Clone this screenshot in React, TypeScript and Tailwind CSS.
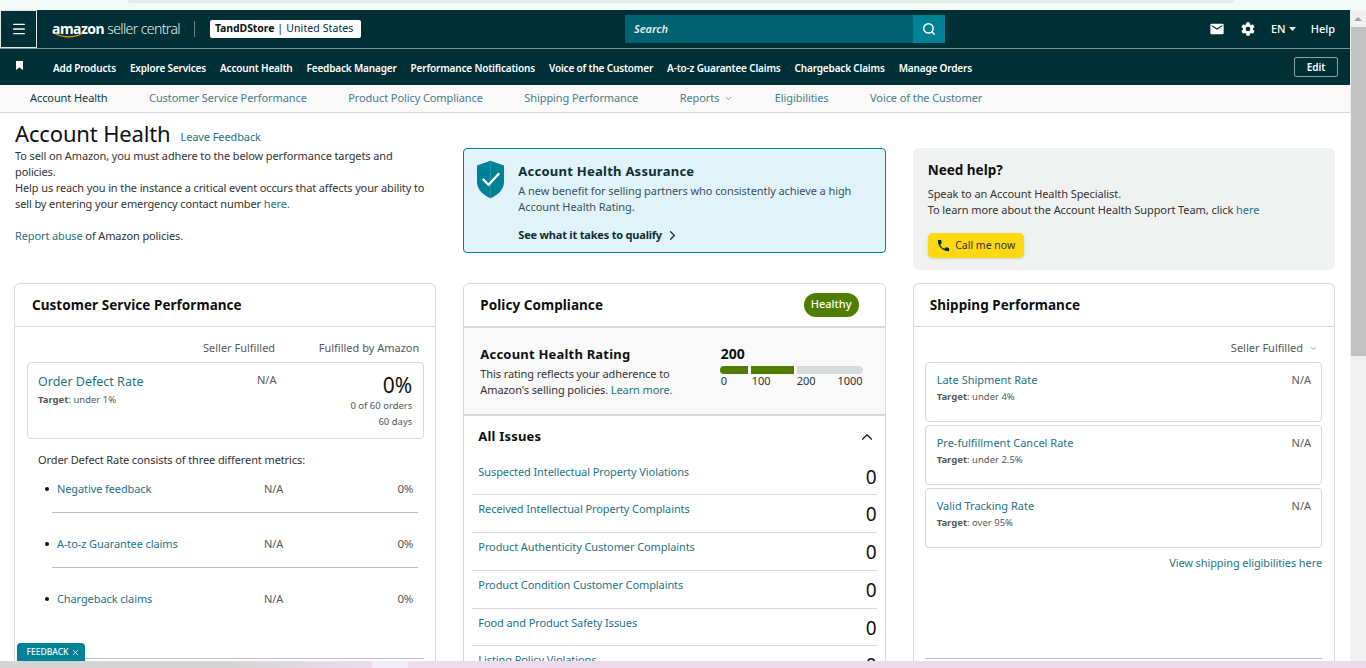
import type { ReactNode } from "react";
import { ChevronDown, ChevronRight, ChevronUp, Menu, Search, X } from "lucide-react";

const NAV_ITEMS = [
  "Add Products",
  "Explore Services",
  "Account Health",
  "Feedback Manager",
  "Performance Notifications",
  "Voice of the Customer",
  "A-to-z Guarantee Claims",
  "Chargeback Claims",
  "Manage Orders",
];

const SHIPPING = [
  { name: "Late Shipment Rate", target: "under 4%" },
  { name: "Pre-fulfillment Cancel Rate", target: "under 2.5%" },
  { name: "Valid Tracking Rate", target: "over 95%" },
];

const ISSUES = [
  "Suspected Intellectual Property Violations",
  "Received Intellectual Property Complaints",
  "Product Authenticity Customer Complaints",
  "Product Condition Customer Complaints",
  "Food and Product Safety Issues",
  "Listing Policy Violations",
];

const METRICS = ["Negative feedback", "A-to-z Guarantee claims", "Chargeback claims"];

const Header = () => (
  <div className="h-[39px] bg-[#002f36] border-b border-[#7d8f92] flex items-center text-white shrink-0">
    <button className="w-[37px] h-[38px] border border-[#e3e6e6] flex items-center justify-center shrink-0">
      <Menu size={16} strokeWidth={2} />
    </button>
    <div className="ml-[15px] w-[130px] relative leading-none whitespace-nowrap -mt-[3px]">
      <span className="text-[14px] font-bold tracking-[-0.5px]">amazon</span>
      <span className="text-[14px] ml-[3px] tracking-[-0.6px] font-light text-[#e8eeee]">seller central</span>
      <svg className="absolute left-[2px] top-[12px]" width="30" height="7" viewBox="0 0 30 7" fill="none">
        <path d="M1 1.5C9 6 20 6 28 1.5" stroke="#ff9900" strokeWidth="1.4" />
      </svg>
    </div>
    <div className="w-px h-[16px] bg-[#6d8286] ml-[12px]" />
    <div className="ml-[15px] h-[18px] w-[151px] px-[5px] bg-white rounded-[2px] flex items-center text-[10.5px] text-[#002f36] tracking-[0.1px] whitespace-nowrap">
      <span className="font-bold text-[#0f1111] tracking-[-0.1px]">TandDStore</span>
      <span className="mx-[3px]">|</span>
      <span>United States</span>
    </div>
    <div className="ml-[264px] w-[320px] h-[28px] flex">
      <div className="flex-1 bg-[#006170] flex items-center px-[9px] text-[11px] italic font-semibold text-[#e6eff0]">Search</div>
      <div className="w-[32px] bg-[#008296] flex items-center justify-center">
        <Search size={14} strokeWidth={2.5} />
      </div>
    </div>
    <div className="ml-auto flex items-center pr-[15px]">
      <svg width="16" height="16" viewBox="0 0 24 24" fill="white">
        <path d="M20 4H4a2 2 0 0 0-2 2v12a2 2 0 0 0 2 2h16a2 2 0 0 0 2-2V6a2 2 0 0 0-2-2zm0 4-8 5-8-5V6l8 5 8-5v2z" />
      </svg>
      <svg className="ml-[15px]" width="16" height="16" viewBox="0 0 24 24" fill="white">
        <path d="M19.4 13c.1-.3.1-.7.1-1s0-.7-.1-1l2.1-1.6c.2-.2.2-.4.1-.6l-2-3.5c-.1-.2-.4-.3-.6-.2l-2.5 1c-.5-.4-1.100-.7-1.700-1L14.500 2.400c0-.2-.2-.4-.5-.4h-4c-.2 0-.5.2-.5.4l-.4 2.700c-.6.2-1.200.6-1.700 1l-2.500-1c-.2-.1-.5 0-.6.2l-2 3.500c-.1.200-.1.500.100.600L4.500 11c0 .3-.1.700-.1 1s0 .7.1 1l-2.100 1.600c-.2.200-.2.400-.1.600l2 3.500c.1.200.4.300.6.200l2.500-1c.5.400 1.100.700 1.700 1l.4 2.700c0 .2.200.4.500.4h4c.2 0 .5-.2.500-.4l.4-2.700c.6-.2 1.200-.6 1.700-1l2.500 1c.2.100.5 0 .6-.2l2-3.500c.1-.2.1-.4-.1-.6L19.400 13zM12 15.500a3.500 3.500 0 1 1 0-7 3.500 3.500 0 0 1 0 7z" />
      </svg>
      <span className="ml-[15px] text-[11px] font-medium">EN</span>
      <svg className="ml-[3px]" width="7" height="4" viewBox="0 0 7 4" fill="#e6eff0">
        <path d="M0 0h7L3.500 4z" />
      </svg>
      <span className="ml-[15px] text-[11px] font-medium">Help</span>
    </div>
  </div>
);

const NavBar = () => (
  <div className="h-[36px] bg-[#002f36] flex items-center text-white shrink-0">
    <svg className="ml-[16px] -mt-[4px]" width="7" height="9" viewBox="0 0 7 9" fill="white">
      <path d="M0 0h7v9L3.500 6.500 0 9z" />
    </svg>
    <div className="ml-[30px] flex gap-[14px] text-[10px] font-semibold tracking-[-0.17px] pt-[2px]">
      {NAV_ITEMS.map((item) => (
        <span key={item} className="whitespace-nowrap">{item}</span>
      ))}
    </div>
    <button className="ml-auto mr-[12px] w-[44px] h-[20px] border border-[#8c9ea1] rounded-[2px] text-[10px] font-semibold">Edit</button>
  </div>
);

const SubNav = () => (
  <div className="h-[28px] bg-[#f9f9f9] border-b border-[#d5d9d9] flex items-center pl-[30px] gap-[41.5px] text-[11px] tracking-[-0.09px] text-[#4a7c85] shrink-0">
    <span className="text-[#0f3a42]">Account Health</span>
    <span>Customer Service Performance</span>
    <span>Product Policy Compliance</span>
    <span>Shipping Performance</span>
    <span className="flex items-center gap-[5px]">
      Reports <ChevronDown size={9} className="text-[#6f7f82]" />
    </span>
    <span>Eligibilities</span>
    <span>Voice of the Customer</span>
  </div>
);

const CardTitle = ({ children }: { children: ReactNode }) => (
  <h2 className="text-[13.5px] font-bold text-[#0f1111] tracking-[0.05px]">{children}</h2>
);

const CustomerServiceCard = () => (
  <div className="border border-[#d5d9d9] rounded-[6px] h-[420px] bg-white">
    <div className="h-[43px] border-b border-[#d5d9d9] flex items-center pl-[17px]">
      <CardTitle>Customer Service Performance</CardTitle>
    </div>
    <div className="pl-[12px] pr-[11px]">
      <div className="h-[35px] flex items-center text-[11px] text-[#565959] pt-[8px]">
        <span className="ml-[176px]">Seller Fulfilled</span>
        <span className="ml-auto pr-[5px]">Fulfilled by Amazon</span>
      </div>
      <div className="h-[77px] border border-[#d5d9d9] rounded-[4px] pl-[10px] pr-[11px] pt-[9px] flex">
        <div className="w-[219px]">
          <div className="text-[12.5px] text-[#1d7484] leading-[20px]">Order Defect Rate</div>
          <div className="text-[9.5px] text-[#565959] leading-[16px]">
            <span className="font-bold">Target</span>: under 1%
          </div>
        </div>
        <span className="text-[11px] text-[#565959] leading-[16px]">N/A</span>
        <div className="ml-auto text-right text-[9.5px] text-[#565959] leading-[16px]">
          <div className="text-[21px] leading-[26px] text-[#0f1111]">0%</div>
          <div>0 of 60 orders</div>
          <div>60 days</div>
        </div>
      </div>
      <p className="mt-[13px] ml-[11px] text-[11px] tracking-[-0.1px] text-[#333] leading-[16px]">Order Defect Rate consists of three different metrics:</p>
      <ul className="mt-[1px]">
        {METRICS.map((m) => (
          <li key={m} className="h-[44px] mb-[11px] pt-[12px] ml-[25px] mr-[6px] border-b border-[#bbbfbf] last:border-b-0 relative flex text-[11px] tracking-[-0.1px] leading-[16px] pr-[5px]">
            <span className="absolute -left-[7px] top-[18px] w-[4px] h-[4px] rounded-full bg-[#0f1111]" />
            <span className="ml-[5px] w-[207px] text-[#1d7484]">{m}</span>
            <span className="text-[#565959]">N/A</span>
            <span className="ml-auto text-[11.5px] text-[#565959]">0%</span>
          </li>
        ))}
      </ul>
      <div className="mt-[35px] border-t border-[#bbbfbf]" />
    </div>
  </div>
);

const PolicyCard = () => (
  <div className="border border-[#d5d9d9] rounded-[6px] h-[420px] bg-white overflow-hidden">
    <div className="h-[44px] border-b-2 border-[#d5d9d9] flex items-center pl-[16px] pr-[26px] justify-between">
      <CardTitle>Policy Compliance</CardTitle>
      <span className="-mt-[1px] h-[24px] w-[55px] rounded-full bg-[#507c00] text-white text-[11px] font-medium flex items-center justify-center">Healthy</span>
    </div>
    <div className="h-[88px] bg-[#f9f9f9] border-b-2 border-[#d5d9d9] pl-[16px] pr-[22px] pt-[16px] flex justify-between">
      <div>
        <div className="text-[13px] font-bold text-[#0f1111] leading-[20px] tracking-[0.2px]">Account Health Rating</div>
        <div className="text-[11px] tracking-[-0.1px] text-[#333] leading-[16px] mt-[2px]">
          This rating reflects your adherence to
          <br />
          Amazon's selling policies. <span className="text-[#1d7484]">Learn more.</span>
        </div>
      </div>
      <div className="w-[143px] pt-[2px]">
        <div className="pl-[1px] text-[14px] font-bold leading-[15px] text-[#0f1111]">200</div>
        <div className="flex gap-[3px] h-[8px] mt-[5px]">
          <div className="w-[28px] bg-[#507c00] rounded-l-full" />
          <div className="w-[43px] bg-[#507c00]" />
          <div className="flex-1 bg-[#d5dbdb] rounded-r-full" />
        </div>
        <div className="pl-[1px] text-[11px] leading-[14px] text-[#333] flex">
          <span className="w-[31px]">0</span>
          <span className="w-[45px]">100</span>
          <span>200</span>
          <span className="ml-auto">1000</span>
        </div>
      </div>
    </div>
    <div className="flex items-center justify-between pl-[14px] pr-[9px] h-[41px]">
      <span className="text-[13px] font-bold text-[#0f1111] tracking-[0.2px]">All Issues</span>
      <ChevronUp size={18} strokeWidth={1.5} className="text-[#0f1111]" />
    </div>
    <div className="px-[8px] pt-[0.5px]">
      {ISSUES.map((issue) => (
        <div key={issue} className="h-[37.75px] border-b border-[#d5d9d9] flex justify-between pl-[6px]">
          <span className="text-[11px] tracking-[-0.1px] leading-[16px] pt-[6px] text-[#1d7484]">{issue}</span>
          <span className="text-[19px] text-[#0f1111] leading-[24px] pt-[7px]">0</span>
        </div>
      ))}
    </div>
  </div>
);

const ShippingCard = () => (
  <div className="border border-[#d5d9d9] rounded-[6px] h-[420px] bg-white">
    <div className="h-[43px] border-b border-[#d5d9d9] flex items-center pl-[16px]">
      <CardTitle>Shipping Performance</CardTitle>
    </div>
    <div className="pl-[11px] pr-[12px]">
      <div className="h-[35px] flex items-center justify-end gap-[6px] text-[11px] text-[#565959] pr-[4px] pt-[8px]">
        Seller Fulfilled <ChevronDown size={9} className="text-[#6f7f82]" />
      </div>
      <div className="flex flex-col gap-[3px]">
        {SHIPPING.map((s) => (
          <div key={s.name} className="h-[60px] border border-[#d5d9d9] rounded-[4px] pl-[11px] pr-[10px] pt-[9px] flex justify-between">
            <div>
              <div className="text-[11px] leading-[16px] mb-[1px] text-[#1d7484]">{s.name}</div>
              <div className="text-[9.5px] leading-[16px] text-[#565959]">
                <span className="font-bold">Target</span>: {s.target}
              </div>
            </div>
            <span className="text-[11px] leading-[16px] text-[#565959]">N/A</span>
          </div>
        ))}
      </div>
      <div className="mt-[7px] text-right text-[11px] tracking-[-0.1px] leading-[16px] text-[#1d7484]">View shipping eligibilities here</div>
      <div className="mt-[87px] border-t border-[#bbbfbf]" />
    </div>
  </div>
);

const App = () => (
  <div className="w-[1366px] h-[668px] overflow-hidden relative bg-white font-['Noto_Sans',sans-serif]">
    <div className="h-[10px] bg-[#f3faf8]">
      <div className="ml-[127px] mr-[132px] h-[3px] bg-[#deefec] rounded-b-[8px]" />
    </div>
    <div className="flex h-[651px]">
      <div className="w-[1350px] flex flex-col overflow-hidden">
        <Header />
        <NavBar />
        <SubNav />
        <div className="px-[14px] pr-[15px] flex-1 min-h-0">
          <div className="grid grid-cols-3 gap-x-[27px] h-[170px]">
            <div className="pt-[5px] pl-[1px]">
              <div className="flex items-baseline">
                <h1 className="text-[22px] tracking-[-0.15px] leading-[30px] text-[#0f1111]">Account Health</h1>
                <span className="ml-[10px] text-[11px] tracking-[-0.1px] text-[#1d7484] -translate-y-px">Leave Feedback</span>
              </div>
              <div className="text-[11px] tracking-[-0.12px] leading-[16px] text-[#333]">
                <p>
                  To sell on Amazon, you must adhere to the below performance targets and
                  <br />
                  policies.
                </p>
                <p>
                  Help us reach you in the instance a critical event occurs that affects your ability to
                  <br />
                  sell by entering your emergency contact number <span className="text-[#1d7484]">here.</span>
                </p>
                <p className="mt-[16px]">
                  <span className="text-[#1d7484]">Report abuse</span> of Amazon policies.
                </p>
              </div>
            </div>
            <div className="pt-[35px]">
              <div className="h-[105px] border border-[#008296] rounded-[4px] bg-[#e1f3f8] flex pl-[12px] pt-[11px]">
                <svg width="29" height="40" viewBox="0 0 30 40" className="shrink-0">
                  <path d="M15 0 L29 5 V22 C29 31 21 36 15 39 C9 36 1 31 1 22 V5 Z" fill="#008296" />
                  <path d="M15 0 V39" stroke="#3d9dab" strokeWidth="0.6" />
                  <path d="M7 19 L13 25 L24 13" fill="none" stroke="white" strokeWidth="2.4" />
                </svg>
                <div className="ml-[13px]">
                  <div className="text-[13px] font-bold leading-[22px] text-[#0f2f36] tracking-[0.25px]">Account Health Assurance</div>
                  <div className="mt-[1px] text-[11px] tracking-[-0.08px] leading-[16px] text-[#37525a]">
                    A new benefit for selling partners who consistently achieve a high
                    <br />
                    Account Health Rating.
                  </div>
                  <div className="mt-[12px] text-[11px] font-bold text-[#0f2f36] flex items-center gap-[3px] tracking-[-0.2px]">
                    See what it takes to qualify <ChevronRight size={15} strokeWidth={2} />
                  </div>
                </div>
              </div>
            </div>
            <div className="pt-[35px]">
              <div className="h-[122px] bg-[#f0f2f2] rounded-[6px] pl-[15px] pt-[12px]">
                <div className="text-[13.5px] font-bold leading-[20px] text-[#0f1111]">Need help?</div>
                <div className="mt-[6px] text-[11px] tracking-[-0.07px] leading-[16px] text-[#333]">
                  Speak to an Account Health Specialist.
                  <br />
                  To learn more about the Account Health Support Team, click <span className="text-[#1d7484]">here</span>
                </div>
                <button className="mt-[15px] h-[25px] w-[96px] bg-[#ffd814] rounded-[5px] flex items-center justify-center gap-[4px] text-[10.5px] text-[#333] shadow-sm">
                  <svg width="15" height="15" viewBox="0 0 24 24" fill="#002f36">
                    <path d="M6.62 10.79c1.44 2.83 3.76 5.14 6.59 6.59l2.2-2.2c.27-.27.67-.36 1.02-.24 1.12.37 2.33.57 3.57.57.55 0 1 .45 1 1V20c0 .55-.45 1-1 1-9.39 0-17-7.61-17-17 0-.55.45-1 1-1h3.5c.55 0 1 .45 1 1 0 1.25.2 2.45.57 3.57.11.35.03.74-.25 1.02l-2.2 2.2z" />
                  </svg>
                  Call me now
                </button>
              </div>
            </div>
          </div>
          <div className="grid grid-cols-3 gap-x-[27px]">
            <CustomerServiceCard />
            <PolicyCard />
            <ShippingCard />
          </div>
        </div>
      </div>
      <div className="w-[16px] bg-[#f1f1f1] flex flex-col items-center">
        <div className="h-[17px] flex items-center justify-center">
          <div className="w-0 h-0 border-x-[4px] border-x-transparent border-b-[4px] border-b-[#a3a3a3]" />
        </div>
        <div className="w-[15px] ml-[1px] h-[329px] bg-[#c1c1c1]" />
      </div>
    </div>
    <div className="h-[7px] flex">
      <div className="w-[372px] bg-gradient-to-r from-[#d4d4d4] from-60% to-[#ecdcec]" />
      <div className="w-[36px] bg-[#f3ecf5]" />
      <div className="flex-1 bg-gradient-to-r from-[#ecdcec] to-[#ecdce8]" />
    </div>
    <div className="absolute left-[17px] top-[643px] w-[68px] h-[18px] bg-[#008296] rounded-t-[4px] text-white text-[8.5px] font-medium flex items-center justify-center gap-[3px] pl-[5px]">
      FEEDBACK <X size={9} />
    </div>
  </div>
);

export default App;
